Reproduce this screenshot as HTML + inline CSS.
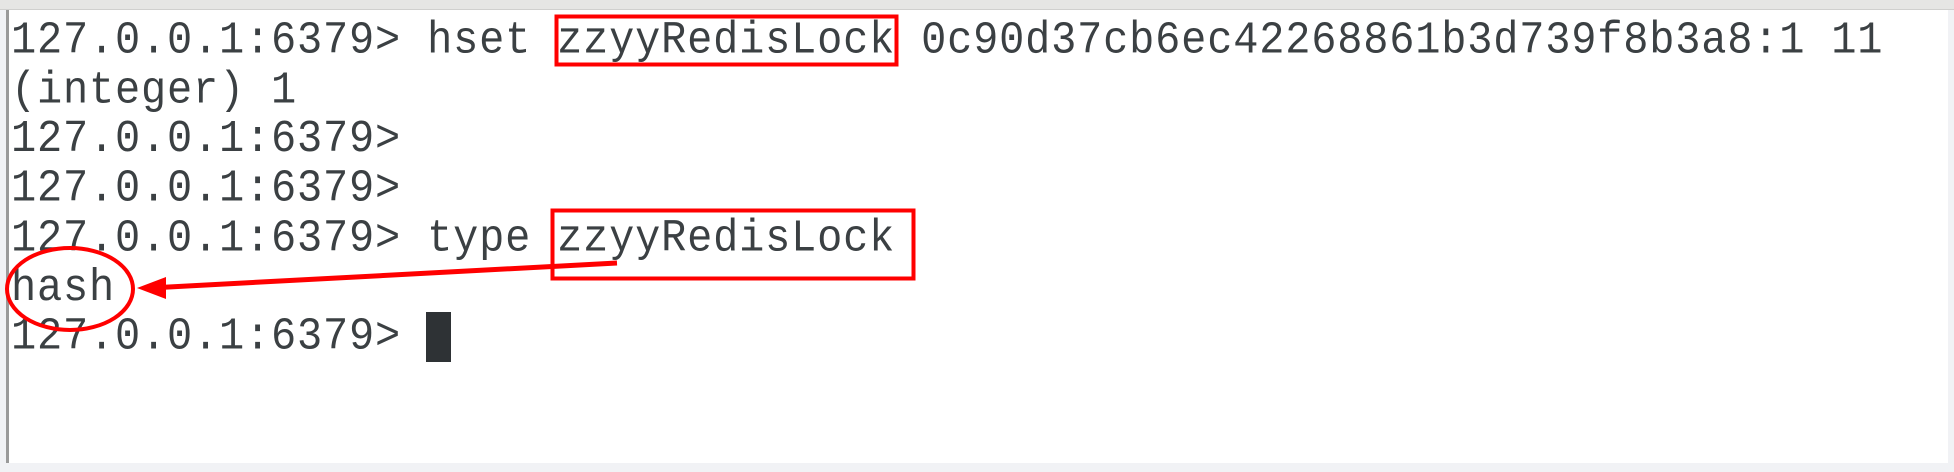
<!DOCTYPE html>
<html><head><meta charset="utf-8"><style>
html,body{margin:0;padding:0;width:1954px;height:472px;overflow:hidden;background:#f1f2f5;}
#top{position:absolute;left:0;top:0;width:1954px;height:9px;background:#e6e6e4;border-bottom:1px solid #d0d0ce;}
#term{position:absolute;left:6px;top:10px;width:1939px;height:453px;background:#fff;border-left:3px solid #9a9a9a;}
#txt{position:absolute;left:11px;top:17px;font-family:"Liberation Mono",monospace;font-size:42px;letter-spacing:0.8px;line-height:45.7px;color:#3b4043;white-space:pre;transform:scaleY(1.08);transform-origin:0 0;}
svg{position:absolute;left:0;top:0;}
</style></head><body>
<div id="top"></div>
<div id="term"></div>
<div id="txt">127.0.0.1:6379&gt; hset zzyyRedisLock 0c90d37cb6ec42268861b3d739f8b3a8:1 11
(integer) 1
127.0.0.1:6379&gt;
127.0.0.1:6379&gt;
127.0.0.1:6379&gt; type zzyyRedisLock
hash
127.0.0.1:6379&gt; </div>
<svg width="1954" height="472">
<rect x="426" y="312" width="25" height="50" fill="#2e3235"/>
<rect x="556.5" y="16.5" width="340" height="48" fill="none" stroke="#f00" stroke-width="4"/>
<rect x="552.5" y="210.5" width="361" height="68" fill="none" stroke="#f00" stroke-width="4"/>
<ellipse cx="70" cy="289" rx="63" ry="41" fill="none" stroke="#f00" stroke-width="4"/>
<line x1="617" y1="263" x2="150" y2="288" stroke="#f00" stroke-width="5"/>
<polygon points="137,288 166,277 166,299" fill="#f00"/>
</svg>
</body></html>
